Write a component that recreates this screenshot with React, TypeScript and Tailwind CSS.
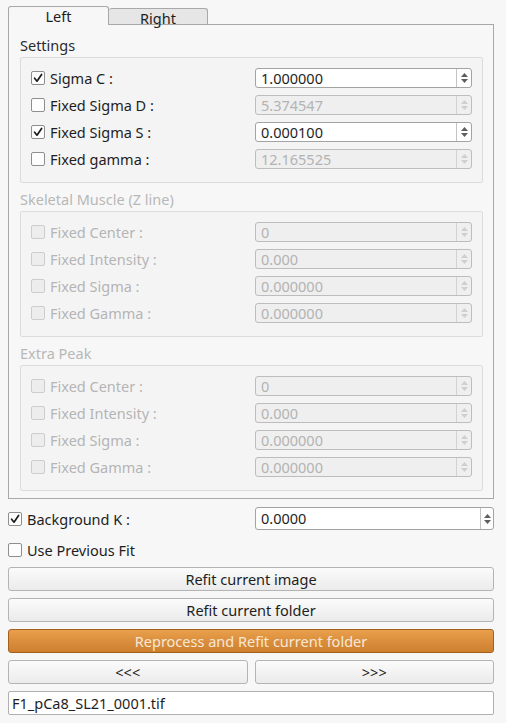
import React from "react";

function Check({ checked, disabled }: { checked?: boolean; disabled?: boolean }) {
  return (
    <span
      className={`flex h-[14px] w-[14px] shrink-0 items-center justify-center rounded-[2px] border ${
        disabled ? "border-[#cdcdcd] bg-[#ededed]" : "border-[#8e8e8e] bg-[#fdfdfd]"
      }`}
    >
      {checked && (
        <svg width="12" height="12" viewBox="0 0 12 12">
          <path d="M2.6 6.2 L5 9.2 L9.6 2.4" fill="none" stroke="#1c1c1c" strokeWidth="1.7" strokeLinecap="round" strokeLinejoin="round" />
        </svg>
      )}
    </span>
  );
}

function Arrows({ disabled, w }: { disabled?: boolean; w: string }) {
  const c = disabled ? "#cfcfcf" : "#5e5e5e";
  return (
    <div
      className={`flex ${w} flex-col items-center justify-center gap-[2px] border-l ${
        disabled ? "border-[#d2d2d2]" : "border-[#c4c4c4]"
      }`}
    >
      <svg width="7" height="4" viewBox="0 0 7 4">
        <path d="M0 4 L3.5 0 L7 4 Z" fill={c} />
      </svg>
      <svg width="7" height="4" viewBox="0 0 7 4">
        <path d="M0 0 L3.5 4 L7 0 Z" fill={c} />
      </svg>
    </div>
  );
}

function Spin({ value, disabled }: { value: string; disabled?: boolean }) {
  return (
    <div
      className={`flex h-[20px] w-[217px] shrink-0 rounded-[3px] border ${
        disabled ? "border-[#bdbdbd] bg-[#efefef] text-[#b3b3b3]" : "border-[#a3a3a3] bg-white text-[#1e1e1e]"
      }`}
    >
      <div className="flex-1 pl-[5px] text-[14.5px] leading-[18px]">{value}</div>
      <Arrows disabled={disabled} w="w-[15px]" />
    </div>
  );
}

type RowT = { label: string; value: string; checked?: boolean; disabled?: boolean; inputDisabled?: boolean };

function Row({ r }: { r: RowT }) {
  return (
    <div className="flex h-[20px] items-center">
      <div className="flex flex-1 items-center gap-[5px]">
        <Check checked={r.checked} disabled={r.disabled} />
        <span className={`text-[14.5px] leading-[18px] ${r.disabled ? "text-[#b5b5b5]" : "text-[#1e1e1e]"}`}>{r.label}</span>
      </div>
      <Spin value={r.value} disabled={r.disabled || r.inputDisabled} />
    </div>
  );
}

function Section({ title, rows, disabled, first }: { title: string; rows: RowT[]; disabled?: boolean; first?: boolean }) {
  return (
    <div className={first ? "" : "mt-[7px]"}>
      <div className={`mb-[3px] h-[18px] text-[14.5px] leading-[18px] ${disabled ? "text-[#b8b8b8]" : "text-[#2a2a2a]"}`}>{title}</div>
      <div className="flex flex-col gap-[7px] rounded-[2px] border border-[#dcdcdc] bg-[#f4f4f4] pb-[13px] pl-[10px] pr-[10px] pt-[10px]">
        {rows.map((r) => (
          <Row key={r.label} r={r} />
        ))}
      </div>
    </div>
  );
}

function Button({ label, orange }: { label: string; orange?: boolean }) {
  return (
    <div
      className={`flex h-[24px] w-full items-center justify-center rounded-[3px] border text-[14.5px] leading-[18px] ${
        orange
          ? "border-[#a2601f] bg-gradient-to-b from-[#e99f4c] to-[#cd7f2e] text-[#f6e8d6]"
          : "border-[#b4b4b4] bg-gradient-to-b from-[#fbfbfb] to-[#ebebeb] text-[#1e1e1e]"
      }`}
    >
      {label}
    </div>
  );
}

export default function App() {
  const settings: RowT[] = [
    { label: "Sigma C :", value: "1.000000", checked: true },
    { label: "Fixed Sigma D :", value: "5.374547", inputDisabled: true },
    { label: "Fixed Sigma S :", value: "0.000100", checked: true },
    { label: "Fixed gamma :", value: "12.165525", inputDisabled: true },
  ];
  const skeletal: RowT[] = [
    { label: "Fixed Center :", value: "0", disabled: true },
    { label: "Fixed Intensity :", value: "0.000", disabled: true },
    { label: "Fixed Sigma :", value: "0.000000", disabled: true },
    { label: "Fixed Gamma :", value: "0.000000", disabled: true },
  ];
  return (
    <div className="h-[723px] w-[506px] overflow-hidden bg-[#f7f7f7] font-['Noto_Sans',sans-serif] text-[14.5px]">
      <div className="flex items-end pl-[8px] pt-[6px]">
        <div className="relative z-10 -mb-px flex h-[19px] w-[101px] items-center justify-center rounded-t-[3px] border border-b-0 border-[#a8a8a8] bg-[#f7f7f7] text-[14.5px] leading-[18px] text-[#1e1e1e]">
          Left
        </div>
        <div className="flex h-[16px] w-[99px] items-center justify-center rounded-t-[3px] border border-b-0 border-l-0 border-[#a8a8a8] bg-[#e6e6e6] pt-[2px] text-[14.5px] leading-[18px] text-[#1e1e1e]">
          Right
        </div>
      </div>
      <div className="ml-[8px] h-[475px] w-[486px] border border-[#a8a8a8] bg-[#f7f7f7] pl-[11px] pr-[10px] pt-[11px]">
        <Section title="Settings" rows={settings} first />
        <Section title="Skeletal Muscle (Z line)" rows={skeletal} disabled />
        <Section title="Extra Peak" rows={skeletal} disabled />
      </div>
      <div className="ml-[8px] w-[486px]">
        <div className="mt-[8px] flex h-[23px] items-center">
          <div className="flex flex-1 items-center gap-[5px]">
            <Check checked />
            <span className="text-[14.5px] leading-[18px] text-[#1e1e1e]">Background K :</span>
          </div>
          <div className="flex h-[23px] w-[239px] rounded-[3px] border border-[#a3a3a3] bg-white">
            <div className="flex-1 pl-[5px] text-[14.5px] leading-[21px] text-[#1e1e1e]">0.0000</div>
            <Arrows w="w-[13px]" />
          </div>
        </div>
        <div className="mt-[10px] flex h-[20px] items-center gap-[5px]">
          <Check />
          <span className="text-[14.5px] leading-[18px] text-[#1e1e1e]">Use Previous Fit</span>
        </div>
        <div className="mt-[7px] flex flex-col gap-[7px]">
          <Button label="Refit current image" />
          <Button label="Refit current folder" />
          <Button label="Reprocess and Refit current folder" orange />
          <div className="flex gap-[7px]">
            <Button label="<<<" />
            <Button label=">>>" />
          </div>
          <div className="flex h-[24px] items-center rounded-[2px] border border-[#b0b0b0] bg-white pl-[3px] text-[14.5px] leading-[18px] text-[#1e1e1e]">
            F1_pCa8_SL21_0001.tif
          </div>
        </div>
      </div>
    </div>
  );
}
